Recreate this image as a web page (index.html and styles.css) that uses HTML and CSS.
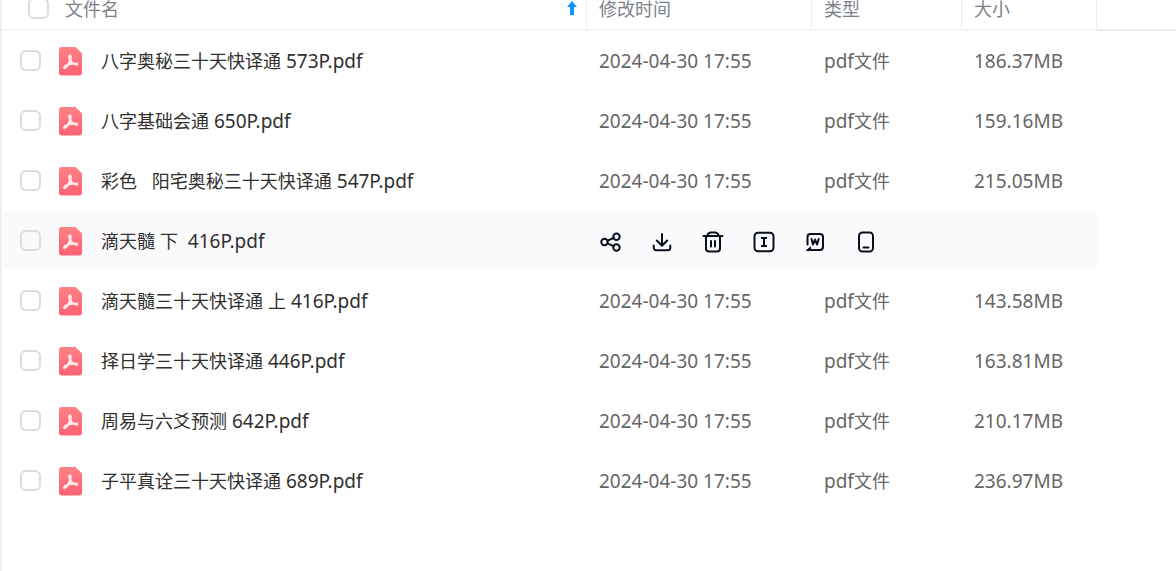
FILE: index.html
```html
<!DOCTYPE html>
<html lang="zh-CN">
<head>
<meta charset="utf-8">
<title>文件列表</title>
<link rel="stylesheet" href="styles.css">
</head>
<body>
<svg class="defs" aria-hidden="true">
  <defs>
    <linearGradient id="red" x1="0" y1="0" x2="0" y2="1"><stop offset="0" stop-color="#ff8084"/><stop offset="1" stop-color="#fe6173"/></linearGradient>
    <symbol id="pdf" viewBox="0 0 24 29">
      <path fill="url(#red)" d="M3 0h13.500L23 6.500v19a3 3 0 0 1-3 3H3a3 3 0 0 1-3-3V3a3 3 0 0 1 3-3z"/>
      <path fill="none" stroke="#ffecee" stroke-width="2" stroke-linejoin="round" stroke-linecap="round" d="M11 8.500c-1.800 0-.5 3.200 0 4.500C10.500 15.500 8.500 19 6 21c-1.800 1-1.500-1.200 1-2.500 3-1.500 7-2.200 10.500-2 1.800.4.800 1.500-.8 1C14.500 17 12 14.500 11.300 12.500c.7-2 .8-4-.3-4z"/>
    </symbol>
  </defs>
</svg>
<main class="files">
<table class="list">
  <colgroup><col><col class="c-time"><col class="c-type"><col class="c-size"><col class="c-rest"></colgroup>
  <thead>
    <tr>
      <th><div class="head-name"><input type="checkbox" class="check" aria-label="全选"><span class="label">文件名</span>
        <svg class="sort" viewBox="0 0 10 14" aria-label="升序"><path fill="#0a95ff" d="M5 0l5 6H7v8H3V6H0z"/></svg></div></th>
      <th>修改时间</th><th>类型</th><th>大小</th><td></td>
    </tr>
  </thead>
  <tbody>
    <tr><td><label class="name"><input type="checkbox" class="check"><svg class="pdf"><use href="#pdf"/></svg><span>八字奥秘三十天快译通<span class="latin"> 573P.pdf</span></span></label></td><td class="latin">2024-04-30 17:55</td><td><span class="latin">pdf</span>文件</td><td class="latin">186.37MB</td><td></td></tr>
    <tr><td><label class="name"><input type="checkbox" class="check"><svg class="pdf"><use href="#pdf"/></svg><span>八字基础会通<span class="latin"> 650P.pdf</span></span></label></td><td class="latin">2024-04-30 17:55</td><td><span class="latin">pdf</span>文件</td><td class="latin">159.16MB</td><td></td></tr>
    <tr><td><label class="name"><input type="checkbox" class="check"><svg class="pdf"><use href="#pdf"/></svg><span>彩色<span class="latin">   </span>阳宅奥秘三十天快译通<span class="latin"> 547P.pdf</span></span></label></td><td class="latin">2024-04-30 17:55</td><td><span class="latin">pdf</span>文件</td><td class="latin">215.05MB</td><td></td></tr>
    <tr class="active"><td><label class="name"><input type="checkbox" class="check"><svg class="pdf"><use href="#pdf"/></svg><span>滴天髓<span class="latin"> </span>下<span class="latin">  416P.pdf</span></span></label></td>
      <td colspan="3"><div class="actions">
        <button type="button" aria-label="分享"><svg viewBox="0 0 22 22"><circle cx="4.500" cy="11" r="3.200"/><circle cx="16.500" cy="5.700" r="3.200"/><circle cx="16.500" cy="16.500" r="3.200"/><path d="M7.500 9.700l6-2.700M7.500 12.400l6 2.800"/></svg></button>
        <button type="button" aria-label="下载"><svg viewBox="0 0 22 22"><path d="M11 3v11.500M5.800 9.500l5.200 5.200 5.200-5.200M2.700 14.500v2.300a2.500 2.500 0 0 0 2.500 2.500h11.600a2.500 2.500 0 0 0 2.500-2.500v-2.300"/></svg></button>
        <button type="button" aria-label="删除"><svg viewBox="0 0 22 22"><path d="M1.500 5h19M4 5v12.500a3 3 0 0 0 3 3h8a3 3 0 0 0 3-3V5M5.500 4.500C6 2.500 7 1.500 9 1.500h4c2 0 3 1 3.500 3M9 10v5.500M13 10v5.500"/></svg></button>
        <button type="button" aria-label="重命名"><svg viewBox="0 0 22 22"><rect x="1.500" y="1.700" width="19" height="18.600" rx="3.500"/><path stroke-linecap="butt" d="M8 7h6M8 15h6M11 7v8"/></svg></button>
        <button type="button" aria-label="转为Word"><svg viewBox="0 0 22 22"><path d="M3.500 13.500V6a3 3 0 0 1 3-3H16a3 3 0 0 1 3 3v10a3 3 0 0 1-3 3H7"/><path fill="#090f20" stroke-width="1" d="M2.500 19.300L6.500 16v3.300z"/><path d="M7.500 8l1.500 5.500 2-5 2 5L14.700 8"/></svg></button>
        <button type="button" aria-label="发送到手机"><svg viewBox="0 0 22 22"><rect x="4" y="1.500" width="14" height="19" rx="3.500"/><path d="M8.500 16.500h5"/></svg></button>
      </div></td><td></td></tr>
    <tr><td><label class="name"><input type="checkbox" class="check"><svg class="pdf"><use href="#pdf"/></svg><span>滴天髓三十天快译通<span class="latin"> </span>上<span class="latin"> 416P.pdf</span></span></label></td><td class="latin">2024-04-30 17:55</td><td><span class="latin">pdf</span>文件</td><td class="latin">143.58MB</td><td></td></tr>
    <tr><td><label class="name"><input type="checkbox" class="check"><svg class="pdf"><use href="#pdf"/></svg><span>择日学三十天快译通<span class="latin"> 446P.pdf</span></span></label></td><td class="latin">2024-04-30 17:55</td><td><span class="latin">pdf</span>文件</td><td class="latin">163.81MB</td><td></td></tr>
    <tr><td><label class="name"><input type="checkbox" class="check"><svg class="pdf"><use href="#pdf"/></svg><span>周易与六爻预测<span class="latin"> 642P.pdf</span></span></label></td><td class="latin">2024-04-30 17:55</td><td><span class="latin">pdf</span>文件</td><td class="latin">210.17MB</td><td></td></tr>
    <tr><td><label class="name"><input type="checkbox" class="check"><svg class="pdf"><use href="#pdf"/></svg><span>子平真诠三十天快译通<span class="latin"> 689P.pdf</span></span></label></td><td class="latin">2024-04-30 17:55</td><td><span class="latin">pdf</span>文件</td><td class="latin">236.97MB</td><td></td></tr>
  </tbody>
</table>
</main>
</body>
</html>
```
FILE: styles.css
```css
* { box-sizing: border-box; }
body {
  margin: 0;
  background: #fff;
  color: #666;
  font: 18px/24px "Noto Sans", "Noto Sans CJK SC", sans-serif;
}
.defs { position: absolute; width: 0; height: 0; }
.files { min-height: 100vh; border-left: 2px solid #f0f0f0; }
.list { width: 100%; table-layout: fixed; border-collapse: separate; border-spacing: 0; }
.c-time { width: 225px; }
.c-type { width: 150px; }
.c-size { width: 135px; }
.c-rest { width: 79px; }

.list thead th, .list thead td {
  height: 31px;
  padding: 0 12px;
  border-bottom: 2px solid #f5f6f8;
  vertical-align: top;
  text-align: left;
  font-weight: 400;
  line-height: 18px;
  color: #7d818a;
}
.list thead th { border-right: 1px solid #ebecef; }
.list thead th:first-child { padding-left: 26px; padding-right: 9px; }
.list thead td { border-bottom-color: #ebecf0; }
.head-name { display: flex; align-items: center; height: 18px; }
.head-name .label { flex: 1; margin-left: 16px; }
.head-name .check { margin-bottom: 2px; }
.sort { width: 10px; height: 14px; margin-bottom: 2px; }

.list tbody td {
  height: 60px;
  padding: 2px 12px 0;
  border-bottom: 2px solid #fff;
  white-space: pre;
}
.list tbody td:first-child {
  padding-left: 16px;
  border-left: 2px solid #fff;
}
.list .active td:not(:last-child) { background: #fafafc; }
.latin { font-size: 19px; }
.name { display: flex; align-items: center; color: #303030; }
.check {
  appearance: none;
  flex: none;
  width: 21px;
  height: 21px;
  margin: 0 0 2px;
  border: 2px solid #dcdcdc;
  border-radius: 6px;
  background: transparent;
}
.check:checked { background: #0a95ff; }
.pdf { flex: none; width: 24px; height: 29px; margin: 0 18px; }

.actions { display: flex; gap: 29px; padding: 2px 0 0 1px; }
.actions button {
  width: 22px;
  height: 22px;
  padding: 0;
  border: 0;
  background: none;
  cursor: pointer;
}
.actions svg {
  display: block;
  width: 22px;
  height: 22px;
  fill: none;
  stroke: #090f20;
  stroke-width: 2;
  stroke-linecap: round;
  stroke-linejoin: round;
}
```
